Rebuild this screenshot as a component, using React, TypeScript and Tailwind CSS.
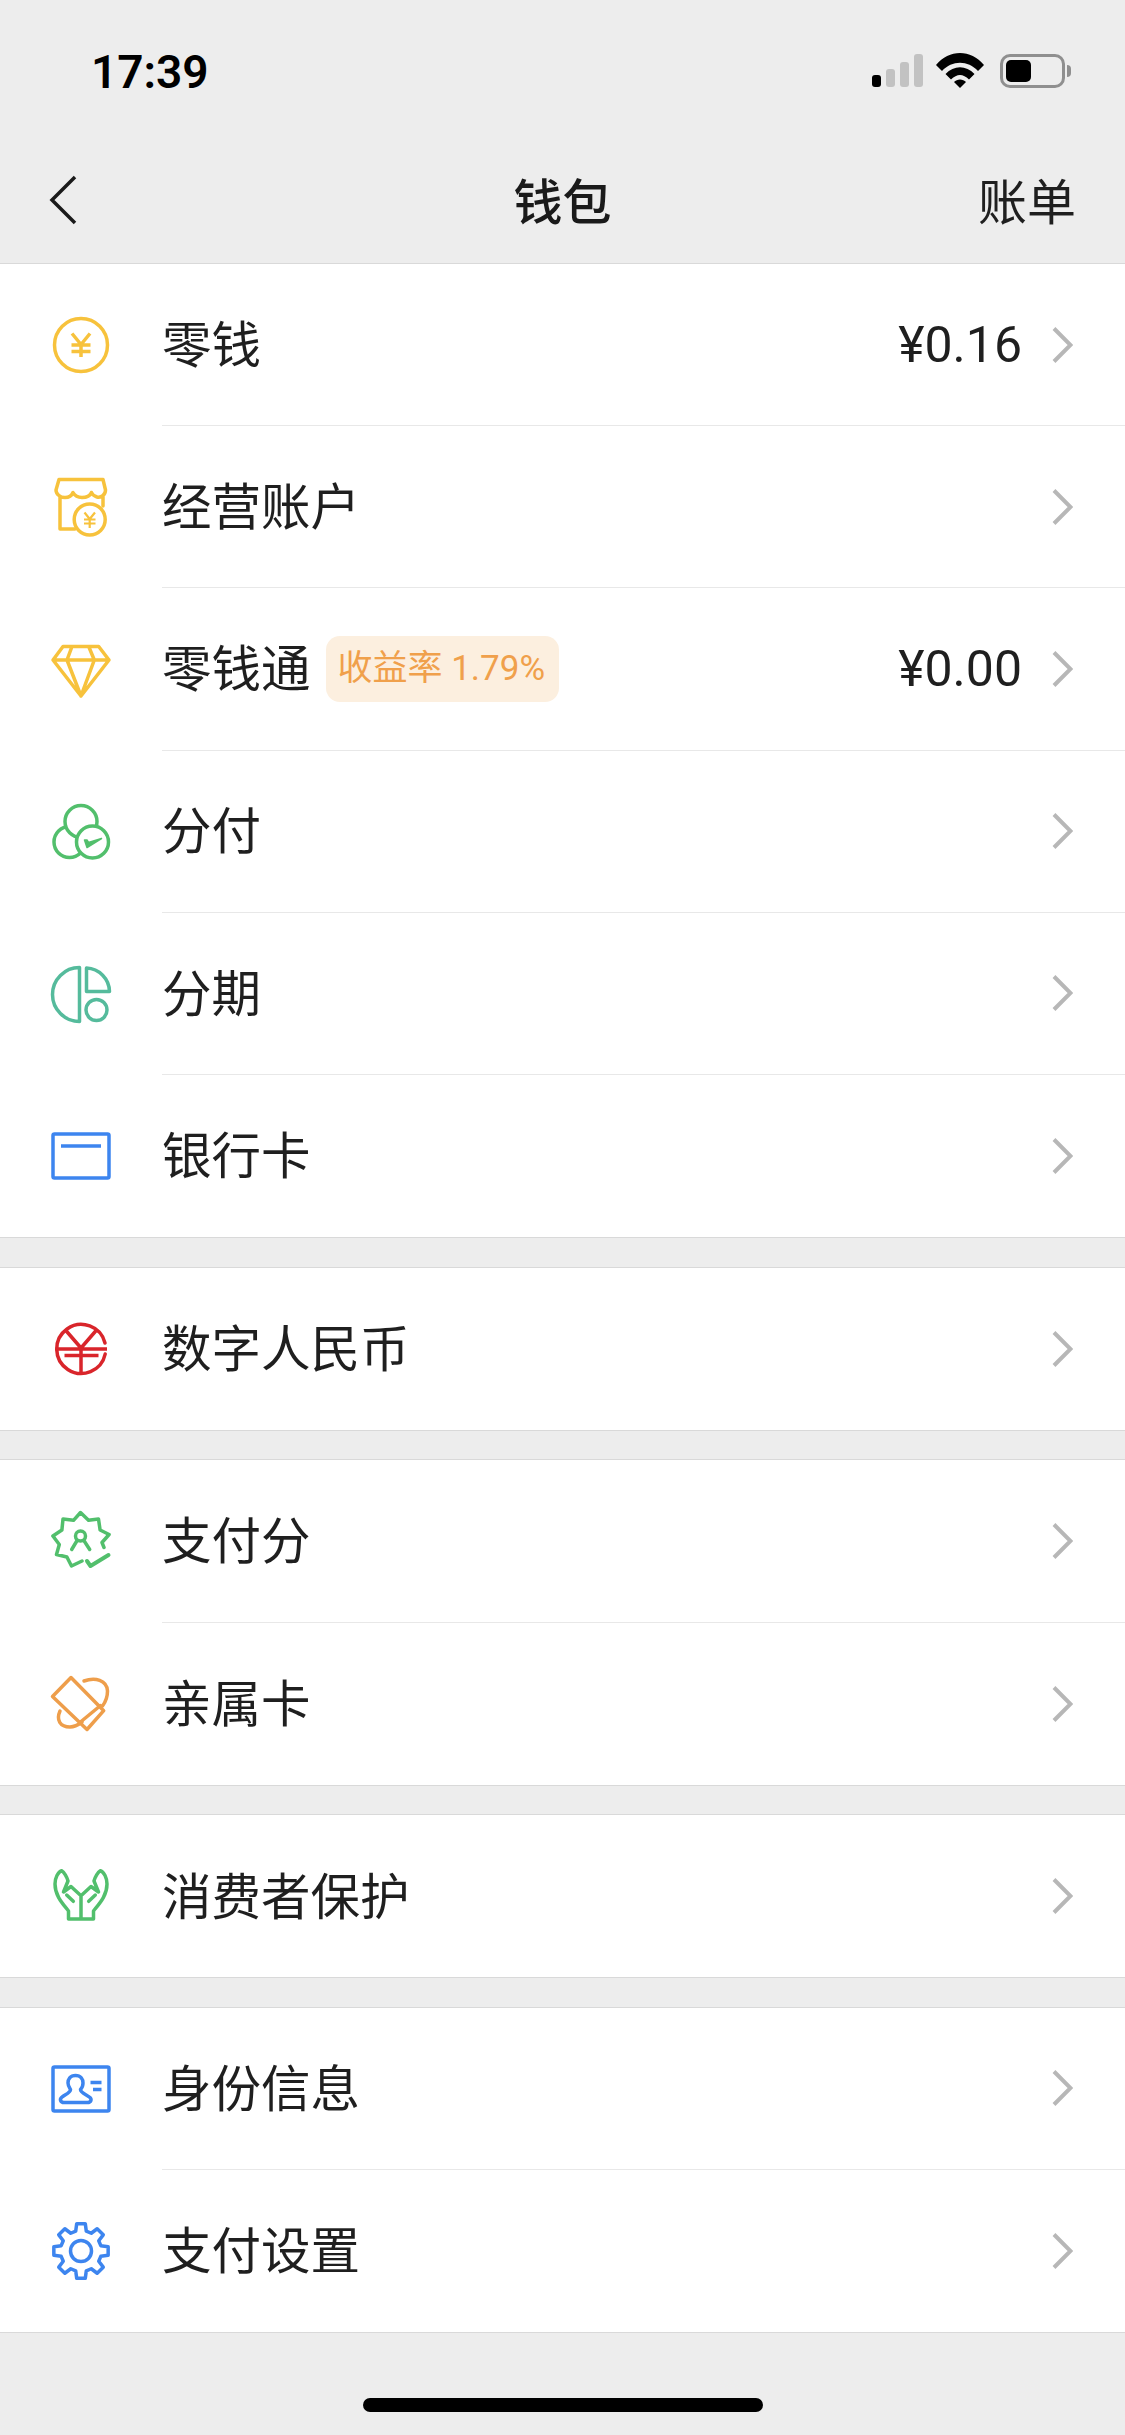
import type { ReactNode } from "react"

const gearPath = () => {
  const pts: string[] = []
  const at = (deg: number, r: number) => {
    const a = (deg * Math.PI) / 180
    return `${(30 + r * Math.sin(a)).toFixed(2)} ${(30 - r * Math.cos(a)).toFixed(2)}`
  }
  for (let i = 0; i < 8; i++) {
    const c = i * 45
    pts.push(at(c - 15, 20.5), at(c - 9, 27.5), at(c + 9, 27.5), at(c + 15, 20.5))
  }
  return `M${pts.join("L")}Z`
}

function Icon({ color, children }: { color: string; children: ReactNode }) {
  return (
    <svg
      width="60"
      height="60"
      viewBox="0 0 60 60"
      fill="none"
      stroke={color}
      strokeWidth="3.5"
      strokeLinejoin="round"
      strokeLinecap="round"
      className="shrink-0 overflow-visible"
    >
      {children}
    </svg>
  )
}

const yellow = "#f7c23c"
const green = "#52bf6c"
const blue = "#3d85ef"

const icons = {
  coin: (
    <Icon color={yellow}>
      <circle cx="30" cy="30" r="26.5" />
      <path d="M21 18.5 30 29.5 39 18.5M20.5 30H39.5M20.5 36.5H39.5M30 30V42" strokeLinecap="butt" />
    </Icon>
  ),
  shop: (
    <Icon color={yellow}>
      <path d="M8 2.5H52L54.5 13C54.5 18 50 21 46 20 43 19 41 17 40.5 15.5 39 19 35 20.5 31 20.5 27 20.5 24 19 22 15.5 21 18 18 20.5 14 20.5 9 20.5 5 17 5 13ZM9 20V52H24M52 20V29" />
      <circle cx="38.7" cy="42.5" r="15.5" />
      <path d="M33.5 35.5 38.7 42 44 35.5M33 42.5H44.5M33 46.5H44.5M38.7 42V51" strokeWidth="2.2" strokeLinecap="butt" />
    </Icon>
  ),
  diamond: (
    <Icon color={yellow}>
      <path d="M12 7.5H47.7L58 21 30 57 2 21ZM2 21H58M21 7.5 16 21 30 57 43.3 21 37.7 7.5" />
    </Icon>
  ),
  fenfu: (
    <Icon color={green}>
      <circle cx="18.5" cy="40" r="15.5" fill="#fff" />
      <circle cx="30" cy="19.5" r="16" fill="#fff" />
      <circle cx="41.5" cy="40" r="16" fill="#fff" />
      <path d="M33.5 38 36 45.5 50.5 36.5 37.5 40.5 36 38Z" fill={green} strokeWidth="1.5" />
    </Icon>
  ),
  fenqi: (
    <Icon color="#55bb9c">
      <path d="M28.5 3.5A27 27 0 0 0 28.5 57.5Z" />
      <path d="M35.5 4V27.5H58.5A24 24 0 0 0 35.5 4Z" />
      <circle cx="45.5" cy="46" r="10.5" />
    </Icon>
  ),
  card: (
    <Icon color={blue}>
      <rect x="2" y="8" width="56" height="44" rx="1.5" />
      <path d="M10 20H50" strokeLinecap="butt" />
    </Icon>
  ),
  ecny: (
    <Icon color="#d9252b">
      <path d="M54 24A24.5 24.5 0 1 0 54.2 35" />
      <path d="M14 10.5 30 29 46 10.5M4.5 30H56M13.5 36.5H47.5M30 29V54" strokeLinecap="butt" />
    </Icon>
  ),
  score: (
    <Icon color={green}>
      <path d="M31 50 20.5 55 15.9 46 5.5 43.5 8.3 33.5 1.9 25 10.9 19 12 8 22.5 9.3 29.5 1.5 37.5 9.3 47.5 8 49.1 19 58.1 23.5 51 31.5 53 36.5" />
      <circle cx="29.5" cy="25" r="5" />
      <path d="M20.7 38.5 25.8 30M38.7 38.5 33.2 30" />
      <path d="M36 50 39.5 55 57.5 44" strokeWidth="4" />
    </Icon>
  ),
  family: (
    <Icon color="#ee9e4b">
      <path d="M20 3.5 52.7 36.7 36 55.5 1.5 22.5ZM29.5 48 49.5 31.5" />
      <path d="M33 7C44 3 56 6 56.5 17 56.5 23 54.5 28 51.5 32M9 37C5 46 9 53 19 53 23 53 27 51 31 48" />
    </Icon>
  ),
  hands: (
    <Icon color={green}>
      <path d="M30 53H17.5V45C12 38 4 30 4 18 4 12 7 6 10.7 4.7 13 6 16 11 17 15L12.5 26 20 20.5 30 29.7 40 20.5 47.5 26 43 15C44 11 47 6 49.3 4.7 53 6 56 12 56 18 56 30 48 38 42.5 45V53ZM30 29.7V53M15.7 29 22.3 35.3M44.3 29 37.7 35.3" />
    </Icon>
  ),
  id: (
    <Icon color={blue}>
      <rect x="2" y="8" width="56" height="44" rx="1.5" />
      <path d="M24.5 16.5C19 16.5 17 20.5 17 24 17 27 18.5 29 19.5 30.5 19.5 34 14 35.5 10.5 38.5 8.5 40.5 9.5 43.5 13 43.5H36.5C40 43.5 41 40.5 39 38.5 35.5 35.5 29.5 34 29.5 30.5 31 29 32 27 32 24 32 20.5 30 16.5 24.5 16.5Z" />
      <path d="M39.5 23.5H50.5M42 30.5H50.5" strokeLinecap="butt" />
    </Icon>
  ),
  gear: (
    <Icon color={blue}>
      <path d={gearPath()} />
      <circle cx="30" cy="30" r="10.5" />
    </Icon>
  ),
}

type Item = { icon: ReactNode; label: string; value?: string; badge?: string }

const sections: Item[][] = [
  [
    { icon: icons.coin, label: "零钱", value: "¥0.16" },
    { icon: icons.shop, label: "经营账户" },
    { icon: icons.diamond, label: "零钱通", value: "¥0.00", badge: "收益率 1.79%" },
    { icon: icons.fenfu, label: "分付" },
    { icon: icons.fenqi, label: "分期" },
    { icon: icons.card, label: "银行卡" },
  ],
  [{ icon: icons.ecny, label: "数字人民币" }],
  [
    { icon: icons.score, label: "支付分" },
    { icon: icons.family, label: "亲属卡" },
  ],
  [{ icon: icons.hands, label: "消费者保护" }],
  [
    { icon: icons.id, label: "身份信息" },
    { icon: icons.gear, label: "支付设置" },
  ],
]

function Chevron() {
  return (
    <svg width="21" height="36" viewBox="0 0 21 36" fill="none" stroke="#b7b7b7" strokeWidth="4" className="shrink-0">
      <path d="M2 1.5 18.5 18 2 34.5" />
    </svg>
  )
}

function Row({ item, last }: { item: Item; last: boolean }) {
  return (
    <div className="flex h-[162.2px] items-center pl-[51px]">
      {item.icon}
      <div
        className={`ml-[51px] flex h-full flex-1 items-center pr-[52px] ${last ? "" : "border-b border-[#e8e8e8]"}`}
      >
        <span className="pb-[6px] text-[49.5px] leading-none text-[#1f1f1f]">{item.label}</span>
        {item.badge && (
          <span className="ml-[15px] flex h-[66px] w-[233px] items-center rounded-[14px] bg-[#fcefdf] pl-[12px] font-['Roboto','Noto_Sans_CJK_SC',sans-serif] text-[35px] leading-none text-[#f0a04b]">
            {item.badge}
          </span>
        )}
        <span className="ml-auto mr-[30px] font-['Roboto','Noto_Sans_CJK_SC',sans-serif] text-[50px] leading-none text-[#1f1f1f]">
          {item.value}
        </span>
        <Chevron />
      </div>
    </div>
  )
}

export default function App() {
  return (
    <div className="flex h-[2435px] w-[1125px] flex-col overflow-hidden bg-[#ededed] font-['Noto_Sans_CJK_SC','Liberation_Sans',sans-serif]">
      <header className="h-[263px] shrink-0">
        <div className="flex h-[141px] items-start justify-between pl-[91px] pr-[54px] pt-[48px]">
          <span className="font-['Roboto',sans-serif] text-[46px] font-semibold leading-[48px] text-black">17:39</span>
          <div className="flex items-center pt-[5px]">
            <div className="flex h-[33px] items-end gap-[5px]">
              <div className="h-[12px] w-[9px] rounded-[3px] bg-black" />
              <div className="h-[18px] w-[9px] rounded-[3px] bg-[#c2c2c2]" />
              <div className="h-[25px] w-[9px] rounded-[3px] bg-[#c2c2c2]" />
              <div className="h-[33px] w-[9px] rounded-[3px] bg-[#c2c2c2]" />
            </div>
            <svg width="48" height="35" viewBox="0 0 48 35" className="ml-[13px]">
              <path d="M0 12C13-4 35-4 48 12L42 18C32 7 16 7 6 18Z" />
              <path d="M9.5 21C18 12 30 12 38.5 21L33 26.5C27 20.5 21 20.5 15 26.5Z" />
              <path d="M18 29C21 25.5 27 25.5 30 29L24 35Z" />
            </svg>
            <div className="ml-[16px] flex items-center">
              <div className="h-[34px] w-[65px] rounded-[10px] border-[3px] border-[#8f8f8f] p-[3px]">
                <div className="h-full w-[25px] rounded-[5px] bg-black" />
              </div>
              <div className="ml-[2px] h-[12px] w-[4px] rounded-r-full bg-[#8f8f8f]" />
            </div>
          </div>
        </div>
        <div className="grid h-[122px] grid-cols-3 items-center px-[49px]">
          <svg width="28" height="50" viewBox="0 0 28 50" fill="none" stroke="#1a1a1a" strokeWidth="3.5" className="mb-[4px]">
            <path d="M26 2 3 25 26 48" />
          </svg>
          <span className="pb-[7px] text-center text-[49px] font-medium leading-none text-[#1a1a1a]">钱包</span>
          <span className="pb-[7px] text-right text-[49px] leading-none text-[#1f1f1f]">账单</span>
        </div>
      </header>

      <main className="flex flex-col gap-[28.5px]">
        {sections.map((items, i) => (
          <section key={i} className="border-y border-[#d9d9d9] bg-white">
            {items.map((item, j) => (
              <Row key={item.label} item={item} last={j === items.length - 1} />
            ))}
          </section>
        ))}
      </main>

      <footer className="flex justify-center pt-[65px]">
        <div className="h-[14px] w-[400px] rounded-full bg-black" />
      </footer>
    </div>
  )
}
